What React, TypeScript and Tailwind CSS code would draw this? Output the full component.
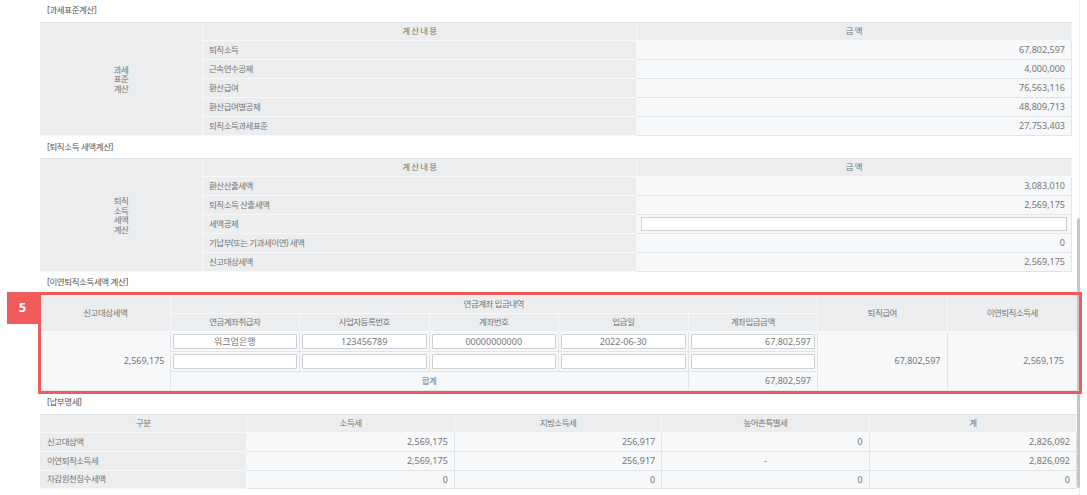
import { Fragment, type ReactNode } from 'react';

// cell palettes: grey label/header cells and light value cells
const GREY = 'bg-[#ebedef] border-[#f7f8f9]';
const LIGHT = 'bg-[#f6f8fa] border-[#e2e5e8]';
const KO = 'text-[8.5px] tracking-[-0.5px]';
const NUM = 'text-[9px]';

const taxBaseRows = [
    ['퇴직소득', '67,802,597'],
    ['근속연수공제', '4,000,000'],
    ['환산급여', '76,563,116'],
    ['환산급여별공제', '48,809,713'],
    ['퇴직소득과세표준', '27,753,403'],
];

const taxAmountRows: [string, string | null][] = [
    ['환산산출세액', '3,083,010'],
    ['퇴직소득 산출세액', '2,569,175'],
    ['세액공제', null],
    ['기납부(또는 기과세이연) 세액', '0'],
    ['신고대상세액', '2,569,175'],
];

const pensionHeaders = ['연금계좌취급자', '사업자등록번호', '계좌번호', '입금일', '계좌입금금액'];
const pensionInputs = [
    ['워크업은행', '123456789', '00000000000', '2022-06-30', '67,802,597'],
    ['', '', '', '', ''],
];

const paymentHeaders = ['구분', '소득세', '지방소득세', '농어촌특별세', '계'];
const paymentRows = [
    ['신고대상액', '2,569,175', '256,917', '0', '2,826,092'],
    ['이연퇴직소득세', '2,569,175', '256,917', '-', '2,826,092'],
    ['차감원천징수세액', '0', '0', '0', '0'],
];

function Cell({ children, className = '' }: { children?: ReactNode; className?: string }) {
    return (
        <div className={`flex min-w-0 items-center border-r border-b text-[#767676] ${className}`}>
            {children}
        </div>
    );
}

function SectionTitle({ children, className = '' }: { children: ReactNode; className?: string }) {
    return (
        <div className={`flex items-center pl-[7px] text-[8.5px] tracking-[-0.4px] text-[#555555] ${className}`}>
            {children}
        </div>
    );
}

function FakeInput({ value = '', align = 'center' }: { value?: string; align?: 'center' | 'right' }) {
    return (
        <input
            readOnly
            value={value}
            className={`h-[15px] w-full rounded-[1px] border border-[#ccd0d4] bg-white px-[3px] text-[9px] text-[#767676] outline-none ${
                align === 'right' ? 'text-right' : 'text-center'
            }`}
        />
    );
}

function StackedLabel({ lines }: { lines: string[] }) {
    return (
        <div className="text-center leading-[9.5px]">
            {lines.map((line) => (
                <div key={line}>{line}</div>
            ))}
        </div>
    );
}

function ScrollBar() {
    return (
        <>
            <div className="absolute top-0 left-[1079px] h-full w-px bg-[#efefef]" />
            <div className="absolute top-[218px] left-[1077px] h-[270px] w-[3px] rounded-full bg-[#c6c6c6]" />
        </>
    );
}

export default function App() {
    return (
        <div className="relative h-[495px] w-[1087px] overflow-hidden bg-white [font-family:'Noto_Sans','Noto_Sans_CJK_KR',sans-serif]">
            <ScrollBar />

            <div className="pl-[40px]">
                {/* 과세표준계산 */}
                <SectionTitle className="h-[22px] pb-[2px]">[과세표준계산]</SectionTitle>
                <div className="grid w-[1032px] grid-cols-[163px_434px_435px] grid-rows-[18px_repeat(5,19px)] border-t border-[#e2e5e8]">
                    <Cell className={`${GREY} ${KO} row-span-6 justify-center`}>
                        <StackedLabel lines={['과세', '표준', '계산']} />
                    </Cell>
                    <Cell className={`${GREY} ${KO} justify-center`}>계 산 내 용</Cell>
                    <Cell className={`${GREY} ${KO} justify-center`}>금 액</Cell>
                    {taxBaseRows.map(([label, value]) => (
                        <Fragment key={label}>
                            <Cell className={`${GREY} ${KO} pl-[6px]`}>{label}</Cell>
                            <Cell className={`${LIGHT} ${NUM} justify-end pr-[6px]`}>{value}</Cell>
                        </Fragment>
                    ))}
                </div>

                {/* 퇴직소득 세액계산 */}
                <SectionTitle className="h-[22px]">[퇴직소득 세액계산]</SectionTitle>
                <div className="grid w-[1032px] grid-cols-[163px_434px_435px] grid-rows-[18px_repeat(5,19px)] border-t border-[#e2e5e8]">
                    <Cell className={`${GREY} ${KO} row-span-6 justify-center`}>
                        <StackedLabel lines={['퇴직', '소득', '세액', '계산']} />
                    </Cell>
                    <Cell className={`${GREY} ${KO} justify-center`}>계 산 내 용</Cell>
                    <Cell className={`${GREY} ${KO} justify-center`}>금 액</Cell>
                    {taxAmountRows.map(([label, value]) => (
                        <Fragment key={label}>
                            <Cell className={`${GREY} ${KO} pl-[6px]`}>{label}</Cell>
                            {value === null ? (
                                <Cell className={`${LIGHT} px-[4px]`}>
                                    <div className="h-[14px] w-full border border-[#ccd0d4] bg-white" />
                                </Cell>
                            ) : (
                                <Cell className={`${LIGHT} ${NUM} justify-end pr-[6px]`}>{value}</Cell>
                            )}
                        </Fragment>
                    ))}
                </div>

                {/* 이연퇴직소득세액 계산 (highlighted) */}
                <SectionTitle className="h-[20px]">[이연퇴직소득세액 계산]</SectionTitle>
                <div className="relative -ml-[2px] w-[1044px] border-[3px] border-[#f05a5a]">
                    <div className="absolute -top-[3px] -left-[34px] flex h-[32px] w-[31px] items-center justify-center bg-[#f05a5a] text-[13px] font-bold text-white">
                        5
                    </div>
                    <div className="grid w-[1036px] grid-cols-[repeat(8,minmax(0,1fr))] grid-rows-[19px_18px_20px_20px_19px]">
                        <Cell className={`${GREY} ${KO} row-span-2 justify-center`}>신고대상세액</Cell>
                        <Cell className={`${GREY} ${KO} col-span-5 justify-center`}>연금계좌 입금내역</Cell>
                        <Cell className={`${GREY} ${KO} row-span-2 justify-center`}>퇴직급여</Cell>
                        <Cell className={`${GREY} ${KO} row-span-2 justify-center border-r-0`}>이연퇴직소득세</Cell>
                        {pensionHeaders.map((h) => (
                            <Cell key={h} className={`${GREY} ${KO} justify-center`}>
                                {h}
                            </Cell>
                        ))}

                        <Cell className={`${LIGHT} ${NUM} row-span-3 justify-end pr-[5px]`}>2,569,175</Cell>
                        {pensionInputs[0].map((v, i) => (
                            <Cell key={`a${i}`} className={`${LIGHT} items-start px-[2px] pt-[2px]`}>
                                <FakeInput value={v} align={i === 4 ? 'right' : 'center'} />
                            </Cell>
                        ))}
                        <Cell className={`${LIGHT} ${NUM} row-span-3 justify-end pr-[6px]`}>67,802,597</Cell>
                        <Cell className={`${LIGHT} ${NUM} row-span-3 justify-end border-r-0 pr-[13px]`}>2,569,175</Cell>
                        {pensionInputs[1].map((v, i) => (
                            <Cell key={`b${i}`} className={`${LIGHT} items-start px-[2px] pt-[2px]`}>
                                <FakeInput value={v} align={i === 4 ? 'right' : 'center'} />
                            </Cell>
                        ))}

                        <Cell className={`${LIGHT} ${KO} col-span-4 justify-center`}>합계</Cell>
                        <Cell className={`${LIGHT} ${NUM} justify-end pr-[6px]`}>67,802,597</Cell>
                    </div>
                </div>

                {/* 납부명세 */}
                <SectionTitle className="h-[20px] pb-[4px]">[납부명세]</SectionTitle>
                <div className="grid w-[1037px] grid-cols-[repeat(5,minmax(0,1fr))] grid-rows-[18px_19px_19px_18px] border-t border-[#e2e5e8]">
                    {paymentHeaders.map((h) => (
                        <Cell key={h} className={`${GREY} ${KO} justify-center`}>
                            {h}
                        </Cell>
                    ))}
                    {paymentRows.map((row) => (
                        <Fragment key={row[0]}>
                            <Cell className={`${GREY} ${KO} pl-[7px]`}>{row[0]}</Cell>
                            {row.slice(1).map((v, i) => (
                                <Cell
                                    key={i}
                                    className={`${LIGHT} ${NUM} ${v === '-' ? 'justify-center' : 'justify-end pr-[6px]'}`}
                                >
                                    {v}
                                </Cell>
                            ))}
                        </Fragment>
                    ))}
                </div>
            </div>
        </div>
    );
}
